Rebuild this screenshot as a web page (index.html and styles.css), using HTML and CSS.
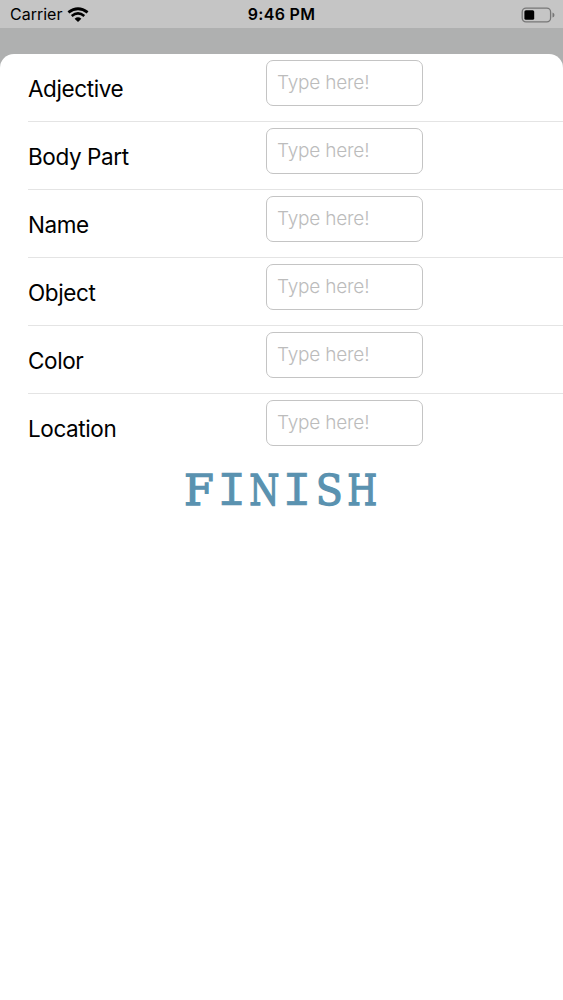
FILE: index.html
```
<!DOCTYPE html>
<html lang="en">

<head>
    <meta charset="UTF-8">
    <title>Word List</title>
    <link rel="stylesheet" href="styles.css">
</head>

<body>
    <div class="status">
        <div class="carrier">
            <span>Carrier</span>
            <svg width="22" height="16" viewBox="0 0 22 16">
                <path d="M1.4 5.4Q11 -2 20.6 5.4" fill="none" stroke="#000" stroke-width="2.8"/>
                <path d="M4.7 9Q11 3.8 17.3 9" fill="none" stroke="#000" stroke-width="2.5"/>
                <path d="M7.6 11.7Q11 8.9 14.4 11.7L11 15.1Z"/>
            </svg>
        </div>
        <span class="time">9:46 PM</span>
        <svg class="battery" width="34" height="16" viewBox="0 0 34 16">
            <rect x="1.2" y="1.2" width="28.4" height="13.6" rx="3.8" fill="none" stroke="#777" stroke-width="1.3"/>
            <rect x="3.4" y="3.2" width="9.8" height="9.6" rx="1.6"/>
            <path d="M31.5 5.5Q33.5 6 33.5 8Q33.5 10 31.5 10.5Z" fill="#777"/>
        </svg>
    </div>
    <div class="sheet">
        <div class="row"><label for="w1">Adjective</label><input id="w1" type="text" placeholder="Type here!"></div>
        <div class="row"><label for="w2">Body Part</label><input id="w2" type="text" placeholder="Type here!"></div>
        <div class="row"><label for="w3">Name</label><input id="w3" type="text" placeholder="Type here!"></div>
        <div class="row"><label for="w4">Object</label><input id="w4" type="text" placeholder="Type here!"></div>
        <div class="row"><label for="w5">Color</label><input id="w5" type="text" placeholder="Type here!"></div>
        <div class="row"><label for="w6">Location</label><input id="w6" type="text" placeholder="Type here!"></div>
        <button class="finish"><span class="f">F</span><span class="i">I</span><span class="n">N</span><span class="i">I</span><span class="s">S</span><span class="h">H</span></button>
    </div>
</body>

</html>
```
FILE: styles.css
```
* {
    box-sizing: border-box;
    margin: 0;
    padding: 0;
}

body {
    height: 1000px;
    overflow: hidden;
    display: flex;
    flex-direction: column;
    background: #afb0b0;
    font-family: Inter, "Liberation Sans", sans-serif;
    color: #000;
}

.status {
    height: 28px;
    margin-bottom: 26px;
    padding: 0 8px 0 10px;
    display: grid;
    grid-template-columns: 1fr auto 1fr;
    align-items: center;
    background: #c5c5c5;
    font-size: 16px;
    line-height: 29px;
}

.carrier {
    display: flex;
    align-items: center;
    gap: 5px;
}

.time {
    padding-right: 2px;
    font-weight: 600;
    letter-spacing: 0.3px;
}

.battery {
    justify-self: end;
}

.sheet {
    flex: 1;
    background: #fff;
    border-radius: 14px 14px 0 0;
}

.row {
    height: 68px;
    margin-left: 28px;
    padding-top: 6px;
    display: flex;
    align-items: flex-start;
    border-bottom: 1px solid #e4e4e4;
}

.row:nth-child(6) {
    height: 66px;
    border-bottom: 0;
}

.row label {
    width: 238px;
    padding-top: 14px;
    font-size: 22.5px;
    line-height: 30px;
    letter-spacing: -0.4px;
}

.row input {
    width: 157px;
    height: 46px;
    padding: 0 10px 1px;
    border: 1px solid #c4c4c4;
    border-radius: 7px;
    background: #fff;
    font-family: inherit;
    font-size: 19px;
    font-weight: 300;
    letter-spacing: -0.2px;
}

.row input::placeholder {
    color: #bcbcbc;
}

.finish {
    display: grid;
    grid-template-columns: repeat(6, 32.6px);
    justify-content: center;
    width: 100%;
    padding-right: 2px;
    border: 0;
    background: none;
    color: #5a92b0;
    font-family: "DejaVu Serif", serif;
    font-size: 43px;
    line-height: 60px;
    -webkit-text-stroke: 1.3px #5a92b0;
}

.finish span {
    display: flex;
    justify-content: center;
}

/* squeeze the wide capitals into equal cells */
.finish .n,
.finish .h {
    transform: scaleX(0.8);
}

.finish .s {
    transform: scaleX(0.92);
}

.finish .i {
    padding-top: 2px;
    font-family: "Liberation Mono", monospace;
    font-size: 48px;
    -webkit-text-stroke-width: 0.6px;
}
```
